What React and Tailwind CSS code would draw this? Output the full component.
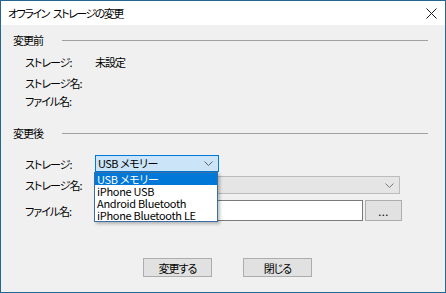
import React from 'react';

function Chevron({ color = '#606060' }) {
  return (
    <svg width="9" height="5" viewBox="0 0 9 5" className="shrink-0">
      <path d="M0.5 0.5 L4.5 4.5 L8.5 0.5" fill="none" stroke={color} strokeWidth="1" />
    </svg>
  );
}

function SectionHeader({ title, className }) {
  return (
    <div className={`flex items-center h-[16px] pl-[12px] pr-[17px] ${className}`}>
      <span className="w-[49px] shrink-0 whitespace-nowrap leading-[16px] tracking-[-1px]">{title}</span>
      <div className="flex-1 h-px bg-[#a0a0a0]" />
    </div>
  );
}

function Row({ label, children, className }) {
  return (
    <div className={`flex items-center pl-[24px] ${className}`}>
      <span className="w-[70px] shrink-0 whitespace-nowrap leading-[16px] tracking-[-1px]">{label}</span>
      {children}
    </div>
  );
}

export default function App() {
  const options = ['USB メモリー', 'iPhone USB', 'Android Bluetooth', 'iPhone Bluetooth LE'];

  return (
    <div className="w-[446px] h-[293px] border border-[#24688f] bg-[#f0f0f0] flex flex-col text-[11px] text-black overflow-hidden font-['Noto_Sans_CJK_JP',sans-serif] [font-feature-settings:'palt']">
      {/* Title bar */}
      <div className="h-[24px] bg-white flex items-center pl-[7px] pr-[8px] shrink-0">
        <div className="flex-1 flex gap-[4px] leading-[16px] tracking-[-1.5px] whitespace-nowrap">
          <span>オフライン</span>
          <span>ストレージの変更</span>
        </div>
        <svg width="11" height="11" viewBox="0 0 11 11">
          <path d="M0.5 0.5 L10.5 10.5 M10.5 0.5 L0.5 10.5" stroke="#1a1a1a" strokeWidth="1" />
        </svg>
      </div>

      {/* Body */}
      <div className="relative flex flex-col flex-1">
        <SectionHeader title="変更前" className="mt-[7px]" />
        <Row label="ストレージ:" className="h-[16px] mt-[6px]">
          <span className="leading-[16px] tracking-[-1px]">未設定</span>
        </Row>
        <Row label="ストレージ名:" className="h-[16px] mt-[5px]" />
        <Row label="ファイル名:" className="h-[16px] mt-[2px]" />

        <SectionHeader title="変更後" className="mt-[16px]" />

        <Row label="ストレージ:" className="h-[17px] mt-[14px]">
          <div className="w-[124px] h-[17px] border border-[#0078d7] bg-[#cce4f7] flex items-center pl-[2px] pr-[5px]">
            <span className="flex-1 leading-[15px] tracking-[-0.5px]">USB メモリー</span>
            <Chevron />
          </div>
        </Row>
        <Row label="ストレージ名:" className="h-[18px] mt-[4px]">
          <div className="w-[305px] h-[18px] border border-[#bcbcbc] bg-[#e5e5e5] flex items-center justify-end pr-[5px]">
            <Chevron color="#7a7a7a" />
          </div>
        </Row>
        <Row label="ファイル名:" className="h-[21px] mt-[6px]">
          <div className="w-[268px] h-[21px] border border-[#7a7a7a] bg-white" />
          <div className="ml-[2px] w-[37px] h-[21px] border border-[#adadad] bg-[#e1e1e1] flex items-center justify-center">
            <span className="leading-[14px] tracking-[0.5px]">...</span>
          </div>
        </Row>

        <div className="flex pl-[142px] gap-[31px] mt-[37px]">
          <button className="w-[69px] h-[19px] border border-[#adadad] bg-[#e1e1e1] leading-[16px] tracking-[-1px]">変更する</button>
          <button className="w-[69px] h-[19px] border border-[#adadad] bg-[#e1e1e1] leading-[16px] tracking-[-1px]">閉じる</button>
        </div>

        {/* Dropdown list */}
        <div className="absolute left-[93px] top-[147px] w-[124px] border border-[#3c6ea3] bg-white shadow-[2px_2px_3px_rgba(0,0,0,0.25)] flex flex-col">
          {options.map((o, i) => (
            <div
              key={o}
              className={`h-[12px] leading-[12px] pl-[2px] whitespace-nowrap tracking-[-0.3px] ${i === 0 ? 'bg-[#0078d7] text-white' : ''}`}
            >
              {o}
            </div>
          ))}
        </div>
      </div>
    </div>
  );
}
